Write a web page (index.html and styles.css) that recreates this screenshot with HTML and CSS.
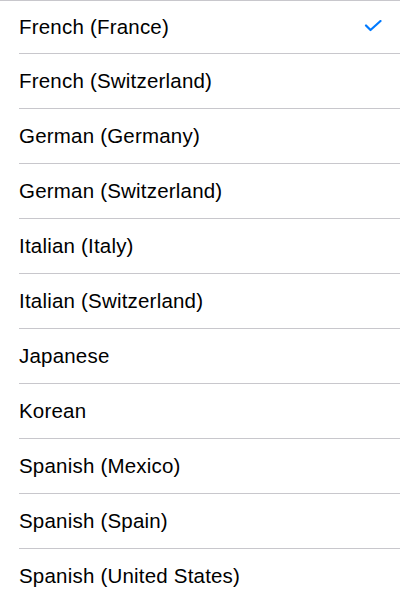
FILE: index.html
```html
<!DOCTYPE html>
<html>
<head>
<meta charset="utf-8">
<link rel="stylesheet" href="styles.css">
</head>
<body>
<ul class="list">
  <li class="row first"><div class="cell"><span class="label">French (France)</span><svg class="check" width="18" height="14" viewBox="0 0 18 14"><polyline points="2,5.5 6.5,10 16.5,1" fill="none" stroke="#007aff" stroke-width="2.2" stroke-linecap="round" stroke-linejoin="round"/></svg></div></li>
  <li class="row"><div class="cell"><span class="label">French (Switzerland)</span></div></li>
  <li class="row"><div class="cell"><span class="label">German (Germany)</span></div></li>
  <li class="row"><div class="cell"><span class="label">German (Switzerland)</span></div></li>
  <li class="row"><div class="cell"><span class="label">Italian (Italy)</span></div></li>
  <li class="row"><div class="cell"><span class="label">Italian (Switzerland)</span></div></li>
  <li class="row"><div class="cell"><span class="label">Japanese</span></div></li>
  <li class="row"><div class="cell"><span class="label">Korean</span></div></li>
  <li class="row"><div class="cell"><span class="label">Spanish (Mexico)</span></div></li>
  <li class="row"><div class="cell"><span class="label">Spanish (Spain)</span></div></li>
  <li class="row"><div class="cell"><span class="label">Spanish (United States)</span></div></li>
</ul>
</body>
</html>
```
FILE: styles.css
```css
html, body {
  margin: 0;
  padding: 0;
  background: #ffffff;
}
body {
  font-family: "Liberation Sans", Arial, sans-serif;
  color: #000000;
  overflow: hidden;
}
.list {
  list-style: none;
  margin: 0;
  padding: 0;
  border-top: 1px solid #c8c7cc;
}
.row {
  padding-left: 19px;
}
.cell {
  height: 54px;
  display: flex;
  align-items: center;
  border-bottom: 1px solid #c8c7cc;
  padding-right: 18px;
}
.row.first .cell {
  height: 52px;
}
.label {
  font-size: 20.5px;
  letter-spacing: 0.2px;
}
.check {
  margin-left: auto;
  display: block;
}
```
